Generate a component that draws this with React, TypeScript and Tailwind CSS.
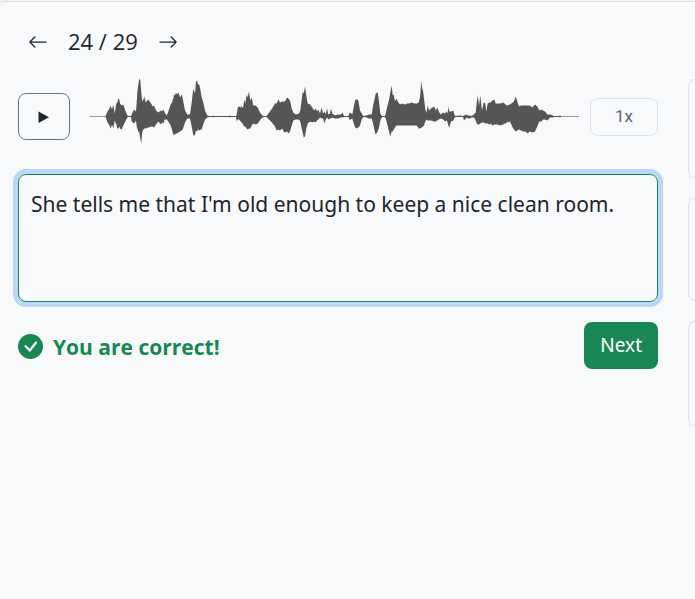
import { useState } from "react";
import { BsArrowLeft, BsArrowRight, BsCheckCircleFill } from "react-icons/bs";

// Each sample: horizontal position, extent above the axis, extent below it.
const samples: [number, number, number][] = [
  [105.5, 0.5, 0.5], [108, 6, 7], [109, 7, 8], [110.7, 11, 12], [112, 7, 8], [113.3, 12, 12], [114.7, 3, 4], [116.3, 13, 8],
  [117.3, 14, 12], [118.3, 18, 12], [119.3, 17, 10], [120, 13, 12], [121.7, 11, 13], [123.3, 12, 9], [125.3, 6, 5], [127.3, 1, 1],
  [128.5, 0.5, 0.5], [131, 0.5, 0.5], [131.7, 2, 5], [134, 7, 7], [136, 5, 4], [136.7, 14, 10], [137.3, 24, 12], [138.3, 32, 15], [139.3, 38, 16], [140.3, 36, 22],
  [141.3, 24, 27], [142, 17, 18], [142.7, 15, 14], [144.3, 20, 12], [145.7, 14, 12], [148.3, 17, 11], [151.7, 12, 10], [152.5, 10, 10],
  [154, 11, 11], [156, 6, 8], [158.3, 4, 5], [161, 6, 8], [162, 5, 6], [163.3, 7, 7], [164.7, 4, 3], [166.7, 1, 3],
  [168.3, 5, 5], [170.7, 12, 9], [172, 14, 13], [173.3, 18, 18], [174, 22, 18], [175, 21, 18], [176, 24, 17], [177, 22, 17],
  [178.5, 24, 16], [180, 19, 15], [181.7, 22, 14], [182.7, 18, 13], [185, 6, 6], [187.3, 2, 2], [190, 2, 2], [191.7, 14, 10],
  [193.3, 28, 19], [194.3, 25, 19], [195, 23, 18], [196, 35, 14], [197, 36, 15], [198, 32, 13], [199.3, 32, 14], [200.3, 27, 13], [201.7, 19, 13],
  [203.3, 14, 8], [205, 6, 3], [207.3, 1, 1], [209, 0.5, 0.5], [212.5, 0.5, 0.5], [213.3, 1, 1], [214.2, 0.5, 0.5], [229, 0.5, 0.5],
  [230, 1, 1], [231, 0.5, 0.5], [236, 0.5, 0.5], [236.7, 2, 5], [237.7, 9, 3], [239, 10, 3], [240.7, 9, 5], [241.7, 11, 6], [243, 8, 8],
  [244.3, 17, 10], [245.3, 13, 10], [246.7, 22, 12], [247.7, 19, 13], [249, 25, 12], [250.3, 16, 12], [251.7, 19, 9],
  [253.3, 11, 7], [255.7, 11, 8], [257.7, 9, 7], [260, 4, 4], [262.3, 1, 1], [264, 0.5, 0.5], [266.5, 0.5, 0.5], [270, 5, 4],
  [272.7, 9, 7], [275, 13, 10], [276.7, 13, 14], [278.3, 17, 13], [280, 14, 14], [282.3, 15, 12], [283.5, 15, 15], [285, 15, 16],
  [287, 19, 15], [288.3, 18, 17], [290, 16, 15], [291.7, 8, 9], [293.3, 4, 4], [295.7, 2, 3], [299, 3, 3], [300.3, 6, 5],
  [301.7, 17, 12], [302.7, 25, 16], [303.7, 23, 21], [305, 30, 20], [306.3, 21, 12], [307.7, 13, 7], [310, 12, 5],
  [312.3, 9, 6], [314, 6, 5], [315.7, 8, 6], [317, 5, 4], [318.3, 7, 3], [320, 3, 1], [321.7, 9, 2], [323, 3, 2], [324.7, 5, 7],
  [325.7, 2, 3], [327, 8, 1], [328.3, 2, 3], [330, 3, 2], [331, 8, 2], [332.3, 3, 1], [335, 1, 2], [338.3, 2, 2], [341, 2, 1],
  [342.7, 4, 1], [344, 0.5, 0.5], [348.5, 0.5, 0.5], [349.2, 3, 3], [350.3, 4, 3], [352.3, 2, 2], [353.7, 9, 7], [355.3, 17, 11],
  [357, 17, 12], [358.3, 16, 11], [360, 6, 9], [361.7, 3, 3], [363.3, 0.5, 0.5], [366.7, 1, 1], [369, 2, 2], [371.7, 2, 2],
  [373.3, 12, 8], [374.5, 17, 14], [375.7, 23, 18], [377.7, 24, 15], [379, 15, 11], [380.3, 3, 4], [382, 0.5, 0.5], [385, 0.5, 0.5],
  [385.7, 3, 2], [387.3, 10, 8], [389.3, 18, 16], [390.3, 24, 20], [391.7, 31, 15], [392.7, 21, 15], [393.7, 22, 13],
  [395, 15, 11], [396.3, 18, 9], [398.3, 14, 9], [400, 12, 9], [402, 13, 9], [405, 12, 9], [407, 13, 9], [409, 13, 9], [412, 14, 9],
  [414, 13, 9], [416.7, 13, 9], [418.7, 14, 12], [420, 19, 12], [421.3, 36, 11], [422, 29, 11], [423, 26, 10], [424, 18, 9],
  [425.3, 7, 5], [426.5, 4, 3], [427.7, 11, 4], [429, 6, 4], [431, 8, 4], [434.3, 10, 5], [435.7, 6, 5], [437.3, 9, 4],
  [438.7, 5, 3], [440.7, 2, 2], [443.3, 4, 3], [445, 3, 5], [446.7, 5, 4], [447.7, 3, 6], [448.3, 10, 9], [449.3, 5, 11], [451, 5, 5],
  [453.3, 6, 4], [454.7, 1, 1], [455.5, 0.5, 0.5], [460, 1, 0.5], [463, 0.5, 0.5], [464, 1, 4], [466.7, 2, 1], [468, 1, 2], [470, 1, 2], [471.5, 0.5, 1],
  [474, 2, 1], [475.7, 4, 4], [476.7, 14, 7], [477.7, 21, 8], [479, 11, 8], [480.3, 21, 7], [482, 6, 6], [483.7, 14, 6],
  [485.3, 13, 7], [486.3, 5, 7], [487.7, 13, 7], [489.3, 14, 8], [490.5, 14, 7], [492.5, 16, 9], [494.3, 17, 8], [495.7, 13, 8], [497.5, 13, 8],
  [500, 13, 9], [503.3, 14, 8], [506.7, 11, 6], [510, 12, 5], [512.7, 14, 11], [514, 15, 13], [515.7, 20, 15],
  [517, 16, 14], [519, 10, 13], [521, 11, 14], [523.3, 11, 15], [525.5, 11, 15], [527.7, 11, 17], [529.5, 11, 15], [532.3, 9, 16],
  [535, 12, 15], [537.3, 10, 10], [539.3, 6, 5], [541.7, 7, 5], [543, 6, 3], [545, 5, 3], [547.3, 2, 4], [550, 2, 1], [553, 1, 1],
  [554, 0.5, 0.5], [559, 0.5, 0.5], [560, 1, 1], [561, 0.5, 0.5],
];

const AXIS = 38.5;
const upper = samples.map(([x, up]) => `${x - 90},${AXIS - up}`);
const lower = [...samples].reverse().map(([x, , down]) => `${x - 90},${AXIS + down}`);
const outline = [...upper, ...lower].join(" ");

function Waveform() {
  return (
    <svg
      viewBox="0 0 489 77"
      preserveAspectRatio="none"
      className="h-[77px] min-w-0 flex-1"
      role="img"
      aria-label="Audio waveform"
    >
      <rect x="0" y="38" width="489" height="1" fill="#999" />
      <polygon points={outline} fill="#555" />
    </svg>
  );
}

export default function App() {
  const [answer, setAnswer] = useState(
    "She tells me that I'm old enough to keep a nice clean room."
  );

  return (
    <div className="min-h-screen overflow-hidden bg-[#f1f2f4] pt-px font-['Noto_Sans','Open_Sans',sans-serif] text-[#212529]">
      <div className="flex min-h-screen gap-[30px] rounded-tl-md border-t border-[#dee0e2] bg-[#f8f9fb] pl-[18px]">
        <main className="min-w-0 flex-1 pt-6">
          <nav className="flex h-8 items-center gap-5 pl-2.5 font-['Open_Sans','Noto_Sans',sans-serif] text-[22px] leading-[30px]">
            <button type="button" aria-label="Previous">
              <BsArrowLeft size={20} />
            </button>
            <span className="pb-0.5">24 / 29</span>
            <button type="button" aria-label="Next sentence">
              <BsArrowRight size={20} />
            </button>
          </nav>

          <div className="mt-5 flex items-center">
            <button
              type="button"
              aria-label="Play"
              className="flex h-[47px] w-[52px] items-center justify-center rounded-lg border border-[#6c757d]"
            >
              <svg width="12" height="12" viewBox="0 0 12 12" fill="currentColor">
                <path d="M0.5 0.5v11.5L11 6.25z" />
              </svg>
            </button>
            <div className="flex min-w-0 flex-1 pr-[11px] pl-5">
              <Waveform />
            </div>
            <button
              type="button"
              className="h-[38px] w-[68px] rounded-lg border border-[#dee2e6] font-[Roboto,sans-serif] text-[17px] text-[#63676b]"
            >
              1x
            </button>
          </div>

          <textarea
            aria-label="Your answer"
            spellCheck={false}
            value={answer}
            onChange={(e) => setAnswer(e.target.value)}
            className="mt-[19px] block h-32 w-full resize-none rounded-lg border border-[#198754] bg-transparent px-3 py-3 text-[21px] leading-[34px] ring-[5px] ring-[#bbd6fb] outline-none"
          />

          <div className="mt-5 flex items-center justify-between">
            <p className="flex items-center gap-2.5 pt-0.5 font-['Open_Sans','Noto_Sans',sans-serif] text-[21px] leading-8 font-bold text-[#198754]">
              <BsCheckCircleFill size={25} />
              You are correct!
            </p>
            <button
              type="button"
              className="h-[47px] rounded-lg bg-[#198754] px-4 text-[19px] text-white"
            >
              Next
            </button>
          </div>
        </main>

        <aside className="flex w-[7px] flex-col gap-5 pt-[77px]">
          <div className="h-[99px] rounded-l-lg border border-r-0 border-[#dee2e6]" />
          <div className="h-[103px] rounded-l-lg border border-r-0 border-[#dee2e6]" />
          <div className="h-[105px] rounded-l-lg border border-r-0 border-[#dee2e6]" />
        </aside>
      </div>
    </div>
  );
}
